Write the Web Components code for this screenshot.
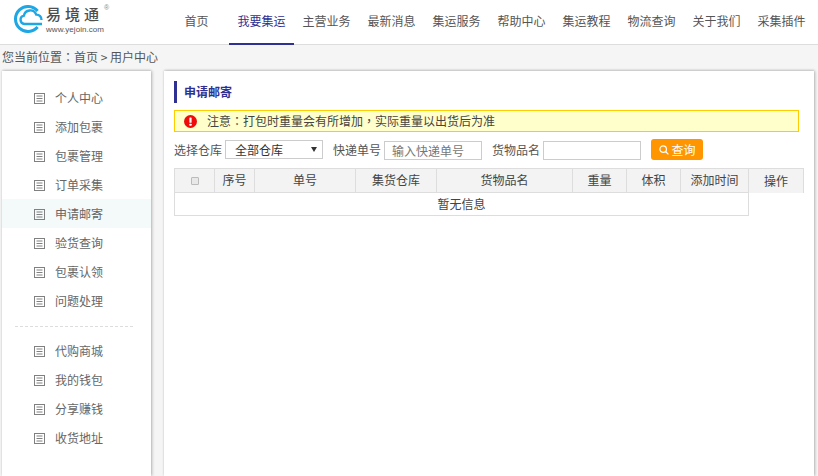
<!DOCTYPE html>
<html lang="zh">
<head>
<meta charset="utf-8">
<title>申请邮寄</title>
<style>
  html, body { margin: 0; height: 100%; overflow: hidden; }
  body { background: #f5f5f5; color: #333; font: 12px/1.5 "Noto Sans CJK SC", "Liberation Sans", sans-serif; }
</style>
</head>
<body>
<app-shell>
  <site-header slot="header">
    <nav-link>首页</nav-link>
    <nav-link active>我要集运</nav-link>
    <nav-link>主营业务</nav-link>
    <nav-link>最新消息</nav-link>
    <nav-link>集运服务</nav-link>
    <nav-link>帮助中心</nav-link>
    <nav-link>集运教程</nav-link>
    <nav-link>物流查询</nav-link>
    <nav-link>关于我们</nav-link>
    <nav-link>采集插件</nav-link>
  </site-header>
  <bread-crumb slot="crumb"></bread-crumb>
  <side-menu slot="side">
    <menu-item>个人中心</menu-item>
    <menu-item>添加包裹</menu-item>
    <menu-item>包裹管理</menu-item>
    <menu-item>订单采集</menu-item>
    <menu-item active>申请邮寄</menu-item>
    <menu-item>验货查询</menu-item>
    <menu-item>包裹认领</menu-item>
    <menu-item>问题处理</menu-item>
    <menu-split></menu-split>
    <menu-item>代购商城</menu-item>
    <menu-item>我的钱包</menu-item>
    <menu-item>分享赚钱</menu-item>
    <menu-item>收货地址</menu-item>
  </side-menu>
  <main-panel slot="main">
    <panel-title>申请邮寄</panel-title>
    <notice-bar>注意<span lang="zh-TW">：</span>打包时重量会有所增加<span lang="zh-TW">，</span>实际重量以出货后为准</notice-bar>
    <filter-bar></filter-bar>
    <mail-table></mail-table>
  </main-panel>
</app-shell>

<script>
function define(name, html) {
  customElements.define(name, class extends HTMLElement {
    constructor() {
      super();
      this.attachShadow({ mode: "open" }).innerHTML = html;
    }
  });
}

define("app-shell", `
  <style>
    :host { display: flex; flex-direction: column; height: 100vh; }
    .body { flex: 1; min-height: 0; display: flex; gap: 13px; padding: 0 4px 0 2px; }
  </style>
  <slot name="header"></slot>
  <slot name="crumb"></slot>
  <div class="body"><slot name="side"></slot><slot name="main"></slot></div>
`);

define("site-header", `
  <style>
    :host { display: flex; height: 44px; background: #fff; border-bottom: 1px solid #ddd; }
    .logo { width: 164px; flex: none; display: flex; padding: 5px 0 0 14px; box-sizing: border-box; }
    .words { position: relative; margin-left: 2px; }
    .name { font-size: 15px; line-height: 20px; letter-spacing: 4px; font-weight: 500; color: #4d4d4d; margin-top: -1px; white-space: nowrap; }
    .url { font: 8px/9px "Liberation Sans", sans-serif; letter-spacing: .05px; color: #555; margin-top: 1px; white-space: nowrap; }
    .reg { position: absolute; left: 58px; top: -2px; font: 7px/9px "Liberation Sans", sans-serif; color: #888; }
    nav { display: flex; }
  </style>
  <div class="logo">
    <svg width="30" height="28" viewBox="0 0 30 28" fill="none" stroke="#1ea7e4">
      <path stroke-width="3" d="M23.6 6A12.5 12.5 0 1 0 23.6 22"/>
      <path stroke-width="2.4" d="M28 19H10.5a4.2 4.2 0 0 1-.6-8.3a6.4 6.4 0 0 1 12.3-1.1a5 5 0 0 1 5.3 5.4"/>
    </svg>
    <div class="words">
      <div class="name">易境通</div>
      <div class="url">www.yejoin.com</div>
      <span class="reg">®</span>
    </div>
  </div>
  <nav><slot></slot></nav>
`);

define("nav-link", `
  <style>
    :host { display: block; width: 65px; height: 45px; box-sizing: border-box; text-align: center; line-height: 41px; font-size: 12px; color: #555; }
    :host([active]) { color: #2e3192; border-bottom: 2px solid #2e3192; }
  </style>
  <slot></slot>
`);

define("bread-crumb", `
  <style>
    :host { display: block; height: 26px; line-height: 23px; padding-left: 2px; font-size: 12px; color: #555; }
    .p { font-family: "Noto Sans CJK TC", sans-serif; }
  </style>
  您当前位置<span class="p" lang="zh-TW">：</span>首页 &gt; 用户中心
`);

define("side-menu", `
  <style>
    :host { display: block; width: 149px; flex: none; background: #fff; box-shadow: 1px 0 3px rgba(0,0,0,.25), 0 -1px 2px rgba(0,0,0,.1); padding-top: 12px; box-sizing: border-box; }
  </style>
  <slot></slot>
`);

define("menu-item", `
  <style>
    :host { display: flex; align-items: center; height: 29px; padding-left: 32px; gap: 10px; font-size: 12px; color: #666; }
    :host([active]) { background: #f4f9f9; }
    svg { flex: none; margin-top: 1px; }
  </style>
  <svg width="11" height="11" viewBox="0 0 11 11" fill="none" stroke="#808080">
    <rect x=".5" y=".5" width="10" height="10"/>
    <path d="M2.5 3h6M2.5 5.5h6M2.5 8h6"/>
  </svg>
  <slot></slot>
`);

define("menu-split", `
  <style>
    :host { display: block; height: 0; margin: 11px 18px 9px 13px; border-top: 1px dashed #ddd; }
  </style>
`);

define("main-panel", `
  <style>
    :host { display: block; flex: 1; min-width: 0; background: #fff; box-shadow: 1px 0 3px rgba(0,0,0,.25), 0 -1px 2px rgba(0,0,0,.1); padding: 10px 10px 0; box-sizing: border-box; }
  </style>
  <slot></slot>
`);

define("panel-title", `
  <style>
    :host { display: block; height: 22px; line-height: 22px; border-left: 3px solid #2e3192; padding-left: 7px; font-size: 12px; font-weight: 700; color: #2e3192; }
  </style>
  <slot></slot>
`);

define("notice-bar", `
  <style>
    :host { display: flex; align-items: center; gap: 10px; width: 625px; height: 22px; box-sizing: border-box; margin-top: 7px; padding-left: 9px; background: #ffc; border: 1px solid #fc0; font-size: 12px; color: #444; }
    svg { flex: none; }
    ::slotted(span) { font-family: "Noto Sans CJK TC", sans-serif; }
  </style>
  <svg width="13" height="13" viewBox="0 0 13 13">
    <circle cx="6.5" cy="6.5" r="6.5" fill="#f00a0a"/>
    <rect x="5.4" y="2.4" width="2.2" height="5.4" rx=".6" fill="#fff"/>
    <rect x="5.4" y="8.8" width="2.2" height="2" rx=".5" fill="#fff"/>
  </svg>
  <div><slot></slot></div>
`);

define("filter-bar", `
  <style>
    :host { display: flex; align-items: center; height: 21px; margin-top: 7px; font-size: 12px; color: #555; }
    .sel { display: flex; align-items: center; justify-content: space-between; width: 98px; height: 19px; box-sizing: border-box; margin-left: 3px; margin-right: 10px; padding: 0 4px 0 9px; border: 1px solid #ccc; color: #333; }
    .arrow { width: 0; height: 0; border: 3px solid transparent; border-top: 5px solid #333; border-bottom: 0; margin-right: 1px; }
    .box { width: 98px; height: 19px; box-sizing: border-box; margin: 2px 10px 0 3px; padding: 0 7px; border: 1px solid #ccc; line-height: 17px; color: #777; }
    button { display: flex; align-items: center; justify-content: center; gap: 3px; width: 52px; height: 21px; margin: 0 0 0 10px; padding: 0; border: 0; border-radius: 3px; background: #ff9500; color: #fff; font: inherit; }
  </style>
  <span>选择仓库</span>
  <div class="sel">全部仓库<i class="arrow"></i></div>
  <span>快递单号</span>
  <div class="box">输入快递单号</div>
  <span>货物品名</span>
  <div class="box" style="margin-right:0"></div>
  <button>
    <svg width="10" height="10" viewBox="0 0 11 11" fill="none" stroke="#fff" stroke-width="1.3">
      <circle cx="4.6" cy="4.6" r="3.6"/><path d="M7.4 7.4l3 3"/>
    </svg>查询
  </button>
`);

define("mail-table", `
  <style>
    :host { display: grid; grid-template-columns: 41px 40px 101px 81px 136px 54px 54px 68px 55px; width: 630px; margin-top: 8px; font-size: 12px; color: #444; }
    .h { height: 25px; line-height: 22px; box-sizing: border-box; text-align: center; background: #f3f3f3; border: 1px solid #ddd; border-left: 0; }
    .h.first { border-left: 1px solid #ddd; display: flex; align-items: center; justify-content: center; }
    .h.op { border: 0; border-top: 1px solid #ddd; border-right: 1px solid #ddd; padding-top: 1px; }
    .chk { display: block; width: 6px; height: 6px; border: 1px solid #bbb; background: #e8e8e8; border-radius: 1px; }
    .empty { grid-column: 1 / 9; height: 23px; line-height: 21px; box-sizing: border-box; text-align: center; border: 1px solid #ddd; border-top: 0; }
  </style>
  <div class="h first"><i class="chk"></i></div>
  <div class="h">序号</div>
  <div class="h">单号</div>
  <div class="h">集货仓库</div>
  <div class="h">货物品名</div>
  <div class="h">重量</div>
  <div class="h">体积</div>
  <div class="h">添加时间</div>
  <div class="h op">操作</div>
  <div class="empty">暂无信息</div>
`);
</script>
</body>
</html>
